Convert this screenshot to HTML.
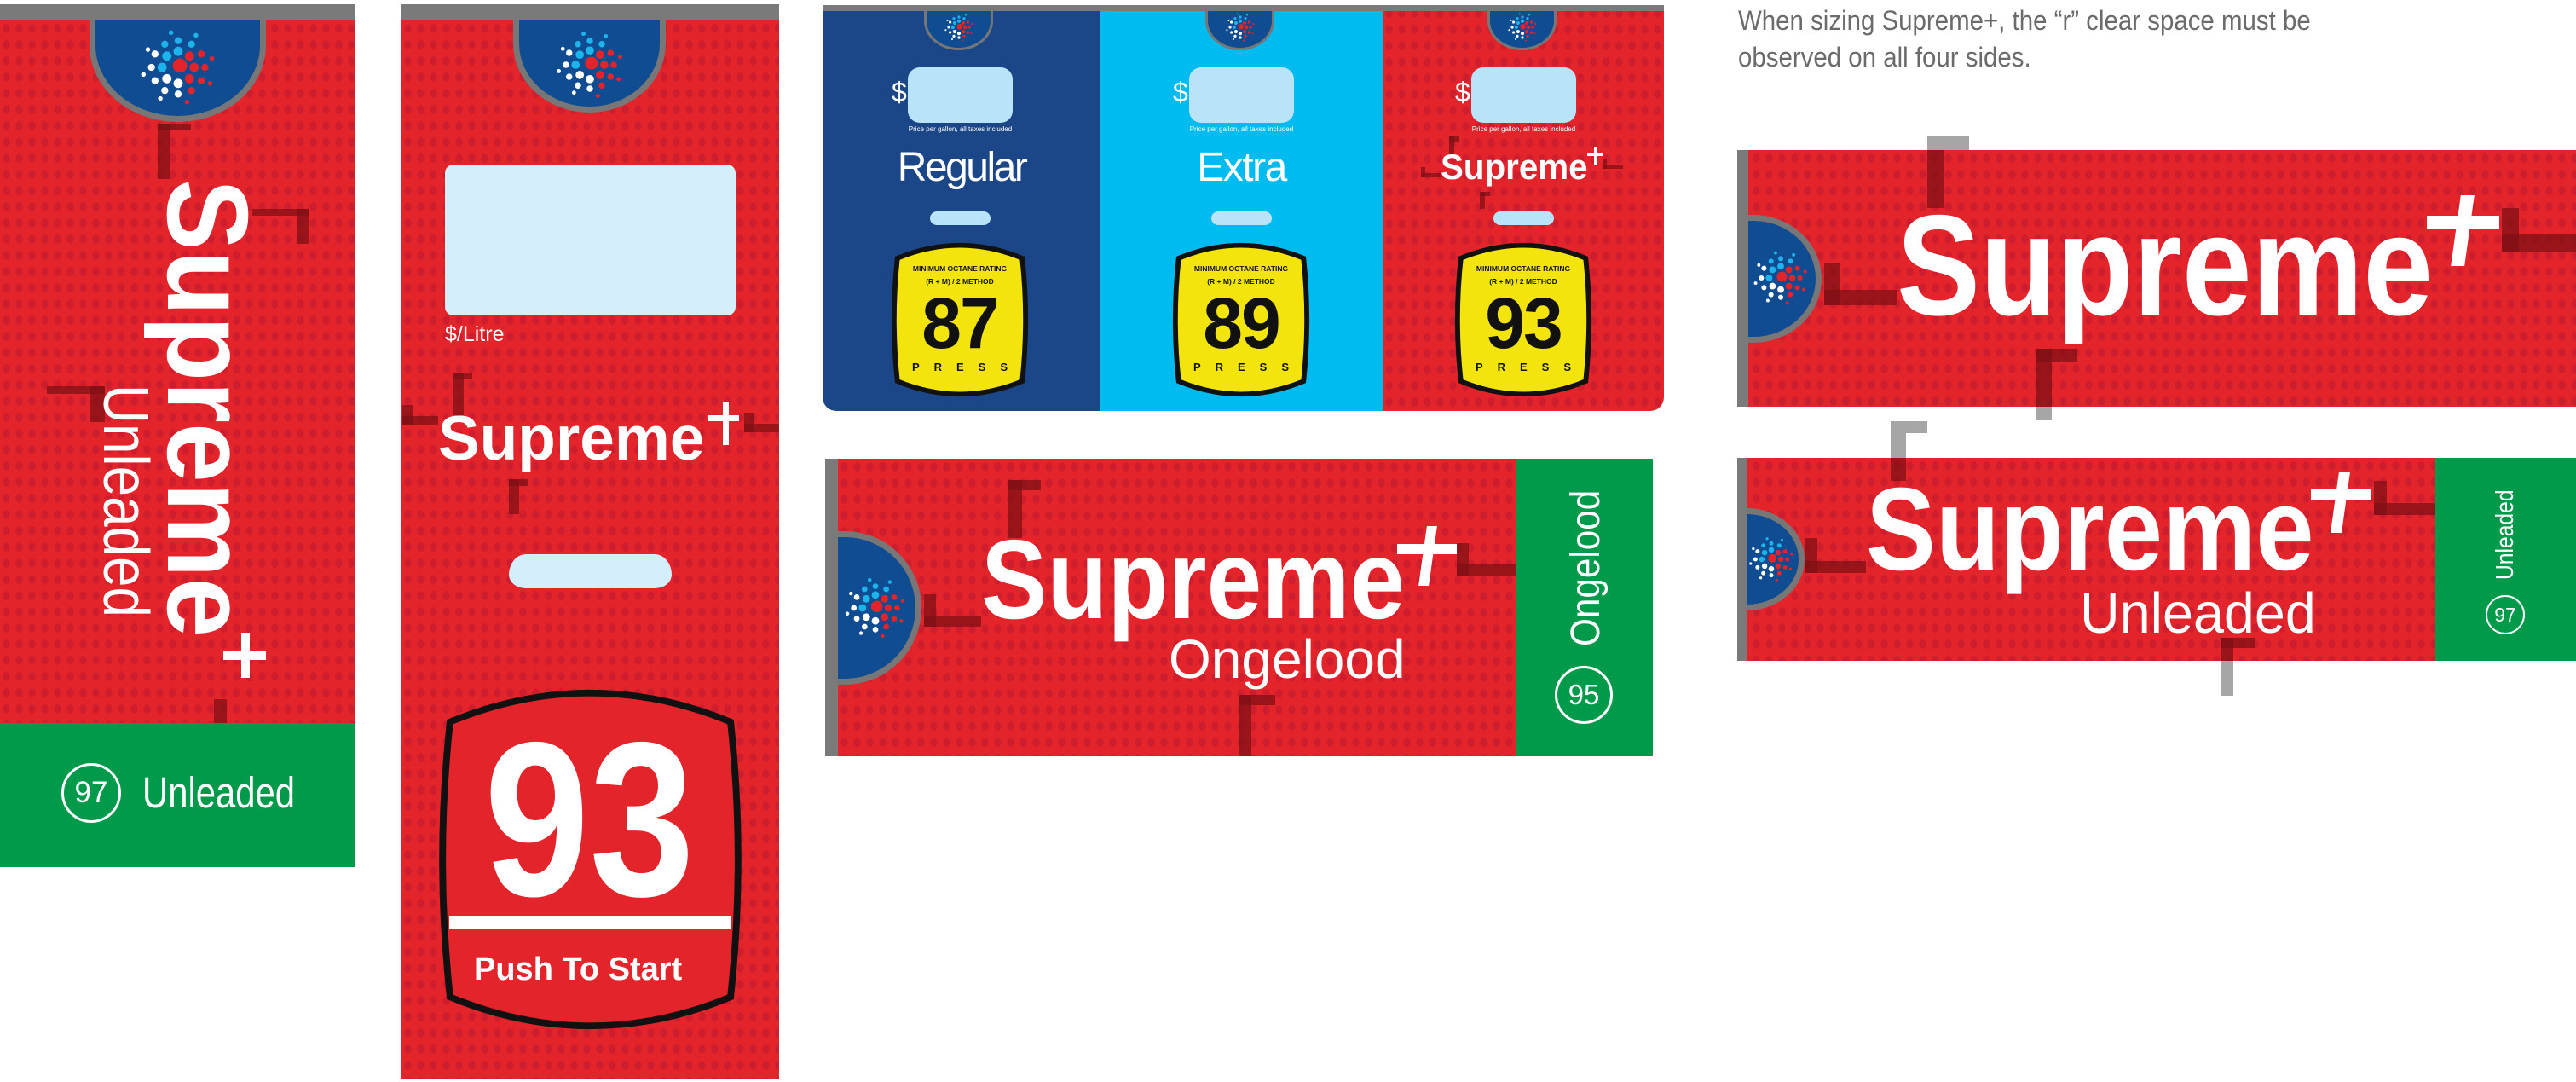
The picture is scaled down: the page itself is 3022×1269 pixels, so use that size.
<!DOCTYPE html>
<html><head><meta charset="utf-8">
<style>
*{margin:0;padding:0;box-sizing:border-box}
body{width:3022px;height:1269px;background:#fff;position:relative;overflow:hidden;font-family:"Liberation Sans",sans-serif;color:#fff}
.a{position:absolute}
.red{background-color:#e3242b;background-image:radial-gradient(ellipse at center,rgba(175,20,50,.42) 0 36%,transparent 42%);background-size:15px 19px}
.dk{position:absolute;background:rgba(125,15,20,.72)}
.gy{position:absolute;background:#a6a6a6}
.gb{position:absolute;background:#7a7a7a}
.wm{position:absolute;font-weight:bold;white-space:nowrap;line-height:1;transform-origin:0 0;color:#fff}
.rg{position:absolute;font-weight:normal;white-space:nowrap;line-height:1;transform-origin:0 0;color:#fff}
.pb{position:absolute;background:#fff}
.badge{position:absolute;background:#0f4c92;border:7px solid #777;border-top:0;border-radius:0 0 50% 50%/0 0 75% 75%;overflow:hidden}
.half{position:absolute;background:#0f4c92;border:7px solid #777;border-left:0}
.circ{position:absolute;border:3px solid #fff;border-radius:50%;display:flex;align-items:center;justify-content:center;font-weight:normal}
</style></head><body>
<svg width="0" height="0" style="position:absolute"><defs><g id="lg">
<circle cx="2" cy="-2" r="8" fill="#e3242b"/>
<circle cx="0" cy="-18" r="5.2" fill="#1cb4ea"/><circle cx="12.7" cy="-12.7" r="5.2" fill="#e3242b"/><circle cx="18" cy="0" r="5.2" fill="#e3242b"/><circle cx="12.7" cy="12.7" r="5.2" fill="#e3242b"/><circle cx="0" cy="18" r="5.2" fill="#fff"/><circle cx="-12.7" cy="12.7" r="5.2" fill="#fff"/><circle cx="-18" cy="0" r="5.2" fill="#1cb4ea"/><circle cx="-12.7" cy="-12.7" r="5.2" fill="#1cb4ea"/>
<circle cx="0" cy="-30" r="4" fill="#1cb4ea"/><circle cx="15" cy="-26" r="4" fill="#1cb4ea"/><circle cx="26" cy="-15" r="4" fill="#e3242b"/><circle cx="30" cy="0" r="4" fill="#e3242b"/><circle cx="26" cy="15" r="4" fill="#e3242b"/><circle cx="15" cy="26" r="4" fill="#e3242b"/><circle cx="0" cy="30" r="4" fill="#fff"/><circle cx="-15" cy="26" r="4" fill="#fff"/><circle cx="-26" cy="15" r="4" fill="#fff"/><circle cx="-30" cy="0" r="4" fill="#fff"/><circle cx="-26" cy="-15" r="4" fill="#fff"/><circle cx="-15" cy="-26" r="4" fill="#1cb4ea"/>
<circle cx="20" cy="-36" r="2.6" fill="#1cb4ea"/><circle cx="38" cy="-10" r="2.6" fill="#e3242b"/><circle cx="36" cy="18" r="2.6" fill="#e3242b"/><circle cx="10" cy="39" r="2.6" fill="#e3242b"/><circle cx="-20" cy="35" r="2.6" fill="#fff"/><circle cx="-39" cy="8" r="2.6" fill="#fff"/><circle cx="-34" cy="-20" r="2.6" fill="#fff"/><circle cx="-8" cy="-39" r="2.6" fill="#1cb4ea"/>
</g>
<path id="oct" d="M10,22 Q85,-10 160,22 Q168,98 160,174 Q85,206 10,174 Q2,98 10,22 Z"/>
</defs></svg>

<!-- PANEL 1 -->
<div class="a red" style="left:0;top:5px;width:416px;height:845px"></div>
<div class="gb" style="left:0;top:5px;width:416px;height:18px"></div>
<div class="badge" style="left:105px;top:23px;width:207px;height:120px"></div>
<svg class="a" style="left:162px;top:32px" width="94" height="94" viewBox="-45 -45 90 90"><use href="#lg"/></svg>
<div class="dk" style="left:185px;top:145px;width:39px;height:8px"></div><div class="dk" style="left:185px;top:145px;width:15px;height:65px"></div>
<div class="dk" style="left:296px;top:245px;width:66px;height:8px"></div><div class="dk" style="left:348px;top:245px;width:14px;height:41px"></div>
<div class="dk" style="left:55px;top:453px;width:68px;height:9px"></div><div class="dk" style="left:105px;top:453px;width:18px;height:42px"></div>
<div class="dk" style="left:251px;top:820px;width:15px;height:30px"></div>
<div class="wm" style="left:311px;top:210px;font-size:135px;transform:rotate(90deg) scaleX(.93)">Supreme</div>
<div class="pb" style="left:262px;top:764px;width:50px;height:10px"></div><div class="pb" style="left:283px;top:742px;width:10px;height:53px"></div>
<div class="rg" style="left:185px;top:451px;font-size:75px;transform:rotate(90deg) scaleX(.85)">Unleaded</div>
<div class="a" style="left:0;top:848px;width:416px;height:169px;background:#009a4a"></div>
<div class="circ" style="left:72px;top:895px;width:70px;height:70px;font-size:35px">97</div>
<div class="rg" style="left:167px;top:904px;font-size:51px;transform:scaleX(.82)">Unleaded</div>

<!-- PANEL 2 -->
<div class="a red" style="left:471px;top:5px;width:443px;height:1261px"></div>
<div class="gb" style="left:471px;top:5px;width:443px;height:19px"></div>
<div class="badge" style="left:602px;top:24px;width:179px;height:108px"></div>
<svg class="a" style="left:650px;top:34px" width="84" height="84" viewBox="-45 -45 90 90"><use href="#lg"/></svg>
<div class="a" style="left:522px;top:193px;width:341px;height:177px;background:#d4eefb;border-radius:10px"></div>
<div class="rg" style="left:522px;top:380px;font-size:25px">$/Litre</div>
<div class="dk" style="left:531px;top:437px;width:23px;height:8px"></div><div class="dk" style="left:531px;top:437px;width:13px;height:50px"></div>
<div class="dk" style="left:472px;top:475px;width:12px;height:23px"></div><div class="dk" style="left:472px;top:488px;width:42px;height:10px"></div>
<div class="dk" style="left:873px;top:484px;width:12px;height:23px"></div><div class="dk" style="left:873px;top:497px;width:41px;height:10px"></div>
<div class="dk" style="left:597px;top:562px;width:23px;height:8px"></div><div class="dk" style="left:597px;top:562px;width:12px;height:41px"></div>
<div class="wm" style="left:514px;top:478px;font-size:73px">Supreme</div>
<div class="pb" style="left:830px;top:487px;width:37px;height:7px"></div><div class="pb" style="left:848px;top:471px;width:7px;height:51px"></div>
<div class="a" style="left:597px;top:650px;width:191px;height:40px;background:#d4eefb;border-radius:20px 20px 20px 20px/24px 24px 16px 16px"></div>
<svg class="a" style="left:506px;top:800px" width="373" height="416" viewBox="0 0 170 196" preserveAspectRatio="none"><use href="#oct" fill="#e3242b" stroke="#111" stroke-width="3.6"/></svg>
<div class="wm" style="left:568px;top:832px;font-size:258px;transform:scaleX(.86)">93</div>
<div class="pb" style="left:527px;top:1074px;width:331px;height:15px"></div>
<div class="wm" style="left:556px;top:1118px;font-size:38px">Push To Start</div>

<!-- PUMP -->
<div class="a" style="left:965px;top:6px;width:987px;height:476px;border-radius:0 0 16px 16px;overflow:hidden">
 <div class="a" style="left:0;top:0;width:326px;height:476px;background:#1b4688"></div>
 <div class="a" style="left:326px;top:0;width:331px;height:476px;background:#00bbf0"></div>
 <div class="a red" style="left:657px;top:0;width:330px;height:476px"></div>
 <div class="gb" style="left:0;top:0;width:987px;height:7px"></div>
</div>
<div class="badge" style="left:1084px;top:13px;width:81px;height:46px;border-width:3px"></div>
<svg class="a" style="left:1107px;top:14px" width="36" height="36" viewBox="-45 -45 90 90"><use href="#lg"/></svg>
<div class="badge" style="left:1414px;top:13px;width:81px;height:46px;border-width:3px"></div>
<svg class="a" style="left:1437px;top:14px" width="36" height="36" viewBox="-45 -45 90 90"><use href="#lg"/></svg>
<div class="badge" style="left:1745px;top:13px;width:81px;height:46px;border-width:3px"></div>
<svg class="a" style="left:1768px;top:14px" width="36" height="36" viewBox="-45 -45 90 90"><use href="#lg"/></svg>
<div class="rg" style="left:1046px;top:92px;font-size:32px">$</div>
<div class="a" style="left:1065px;top:79px;width:123px;height:65px;background:#b8e3f8;border-radius:14px"></div>
<div class="rg" style="left:1065px;top:148px;width:123px;text-align:center;font-size:8px">Price per gallon, all taxes included</div>
<div class="rg" style="left:1376px;top:92px;font-size:32px">$</div>
<div class="a" style="left:1395px;top:79px;width:123px;height:65px;background:#b8e3f8;border-radius:14px"></div>
<div class="rg" style="left:1395px;top:148px;width:123px;text-align:center;font-size:8px">Price per gallon, all taxes included</div>
<div class="rg" style="left:1707px;top:92px;font-size:32px">$</div>
<div class="a" style="left:1726px;top:79px;width:123px;height:65px;background:#b8e3f8;border-radius:14px"></div>
<div class="rg" style="left:1726px;top:148px;width:123px;text-align:center;font-size:8px">Price per gallon, all taxes included</div>
<div class="rg" style="left:965px;top:173px;width:326px;text-align:center;font-size:48px;letter-spacing:-2.5px">Regular</div>
<div class="rg" style="left:1291px;top:173px;width:331px;text-align:center;font-size:48px;letter-spacing:-1.5px">Extra</div>
<div class="dk" style="left:1700px;top:160px;width:12px;height:6px"></div><div class="dk" style="left:1700px;top:160px;width:6px;height:22px"></div>
<div class="dk" style="left:1667px;top:196px;width:5px;height:12px"></div><div class="dk" style="left:1667px;top:203px;width:23px;height:5px"></div>
<div class="dk" style="left:1880px;top:186px;width:5px;height:12px"></div><div class="dk" style="left:1880px;top:193px;width:24px;height:5px"></div>
<div class="dk" style="left:1736px;top:225px;width:12px;height:5px"></div><div class="dk" style="left:1736px;top:225px;width:6px;height:20px"></div>
<div class="wm" style="left:1690px;top:175px;font-size:42px;transform:scaleX(.96)">Supreme</div>
<div class="pb" style="left:1862px;top:179px;width:19px;height:4px"></div><div class="pb" style="left:1870px;top:172px;width:4px;height:22px"></div>
<div class="a" style="left:1091px;top:248px;width:71px;height:16px;background:#b8e3f8;border-radius:8px"></div>
<div class="a" style="left:1421px;top:248px;width:71px;height:16px;background:#b8e3f8;border-radius:8px"></div>
<div class="a" style="left:1752px;top:248px;width:71px;height:16px;background:#b8e3f8;border-radius:8px"></div>
<svg class="a" style="left:1043px;top:282px" width="166" height="186" viewBox="0 0 170 196" preserveAspectRatio="none"><use href="#oct" fill="#f2e40c" stroke="#111" stroke-width="6"/></svg>
<svg class="a" style="left:1373px;top:282px" width="166" height="186" viewBox="0 0 170 196" preserveAspectRatio="none"><use href="#oct" fill="#f2e40c" stroke="#111" stroke-width="6"/></svg>
<svg class="a" style="left:1704px;top:282px" width="166" height="186" viewBox="0 0 170 196" preserveAspectRatio="none"><use href="#oct" fill="#f2e40c" stroke="#111" stroke-width="6"/></svg>
<div style="position:absolute;left:1043px;top:311px;width:166px;text-align:center;color:#111;font-weight:bold;line-height:1">
 <div style="font-size:8.5px">MINIMUM OCTANE RATING</div><div style="font-size:8.5px;margin-top:6px">(R + M) / 2 METHOD</div>
 <div style="font-size:84px;margin-top:3px;letter-spacing:-2px">87</div><div style="font-size:13px;letter-spacing:17px;margin-left:17px;margin-top:3px">PRESS</div></div>
<div style="position:absolute;left:1373px;top:311px;width:166px;text-align:center;color:#111;font-weight:bold;line-height:1">
 <div style="font-size:8.5px">MINIMUM OCTANE RATING</div><div style="font-size:8.5px;margin-top:6px">(R + M) / 2 METHOD</div>
 <div style="font-size:84px;margin-top:3px;letter-spacing:-2px">89</div><div style="font-size:13px;letter-spacing:17px;margin-left:17px;margin-top:3px">PRESS</div></div>
<div style="position:absolute;left:1704px;top:311px;width:166px;text-align:center;color:#111;font-weight:bold;line-height:1">
 <div style="font-size:8.5px">MINIMUM OCTANE RATING</div><div style="font-size:8.5px;margin-top:6px">(R + M) / 2 METHOD</div>
 <div style="font-size:84px;margin-top:3px;letter-spacing:-2px">93</div><div style="font-size:13px;letter-spacing:17px;margin-left:17px;margin-top:3px">PRESS</div></div>

<!-- ONGELOOD BANNER -->
<div class="a red" style="left:968px;top:538px;width:810px;height:349px"></div>
<div class="gb" style="left:968px;top:538px;width:15px;height:349px"></div>
<div class="half" style="left:983px;top:623px;width:98px;height:180px;border-radius:0 90px 90px 0/0 90px 90px 0"></div>
<svg class="a" style="left:989px;top:675px" width="76" height="76" viewBox="-45 -45 90 90"><use href="#lg"/></svg>
<div class="dk" style="left:1183px;top:563px;width:38px;height:12px"></div><div class="dk" style="left:1183px;top:563px;width:16px;height:68px"></div>
<div class="dk" style="left:1084px;top:697px;width:14px;height:38px"></div><div class="dk" style="left:1084px;top:722px;width:67px;height:13px"></div>
<div class="dk" style="left:1709px;top:637px;width:14px;height:38px"></div><div class="dk" style="left:1709px;top:661px;width:69px;height:14px"></div>
<div class="dk" style="left:1454px;top:815px;width:42px;height:12px"></div><div class="dk" style="left:1454px;top:815px;width:14px;height:72px"></div>
<div class="wm" style="left:1151px;top:614px;font-size:132px;transform:scaleX(.88)">Supreme</div>
<div class="pb" style="left:1639px;top:638px;width:70px;height:12px"></div><div class="pb" style="left:1669px;top:617px;width:12px;height:70px;transform:skewX(-8deg)"></div>
<div class="rg" style="left:1371px;top:741px;font-size:64px">Ongelood</div>
<div class="a" style="left:1778px;top:538px;width:161px;height:349px;background:#009a4a"></div>
<div class="rg" style="left:1837px;top:758px;font-size:48px;transform:rotate(-90deg) scaleX(.88)">Ongelood</div>
<div class="circ" style="left:1824px;top:781px;width:68px;height:68px;font-size:33px">95</div>

<!-- CAPTION -->
<div class="a" style="left:2039px;top:3px;color:#6b6b6b;font-size:32px;line-height:43px;transform:scaleX(.92);transform-origin:0 0;white-space:nowrap">When sizing Supreme+, the “r” clear space must be<br>observed on all four sides.</div>

<!-- BANNER A -->
<div class="gy" style="left:2261px;top:160px;width:49px;height:16px;border-radius:8px 0 0 0"></div>
<div class="gy" style="left:2261px;top:160px;width:19px;height:20px"></div>
<div class="a red" style="left:2038px;top:176px;width:984px;height:301px"></div>
<div class="gb" style="left:2038px;top:176px;width:13px;height:301px"></div>
<div class="half" style="left:2051px;top:252px;width:86px;height:150px;border-radius:0 80px 80px 0/0 75px 75px 0"></div>
<svg class="a" style="left:2055px;top:292px" width="68" height="68" viewBox="-45 -45 90 90"><use href="#lg"/></svg>
<div class="dk" style="left:2261px;top:176px;width:19px;height:68px"></div>
<div class="dk" style="left:2140px;top:308px;width:18px;height:50px"></div><div class="dk" style="left:2140px;top:340px;width:85px;height:18px"></div>
<div class="dk" style="left:2935px;top:244px;width:20px;height:51px"></div><div class="dk" style="left:2935px;top:275px;width:87px;height:20px"></div>
<div class="dk" style="left:2388px;top:409px;width:49px;height:16px"></div><div class="dk" style="left:2388px;top:409px;width:19px;height:68px"></div>
<div class="gy" style="left:2388px;top:477px;width:19px;height:16px"></div>
<div class="wm" style="left:2225px;top:227px;font-size:168px;transform:scaleX(.875)">Supreme</div>
<div class="pb" style="left:2847px;top:253px;width:85px;height:16px"></div><div class="pb" style="left:2881px;top:229px;width:16px;height:83px;transform:skewX(-8deg)"></div>

<!-- BANNER B -->
<div class="gy" style="left:2218px;top:494px;width:43px;height:14px;border-radius:8px 0 0 0"></div>
<div class="gy" style="left:2218px;top:494px;width:18px;height:43px"></div>
<div class="a red" style="left:2038px;top:537px;width:819px;height:238px"></div>
<div class="gb" style="left:2038px;top:537px;width:11px;height:238px"></div>
<div class="half" style="left:2049px;top:596px;width:68px;height:120px;border-radius:0 68px 68px 0/0 60px 60px 0"></div>
<svg class="a" style="left:2050px;top:628px" width="56" height="56" viewBox="-45 -45 90 90"><use href="#lg"/></svg>
<div class="dk" style="left:2218px;top:537px;width:18px;height:27px"></div>
<div class="dk" style="left:2117px;top:631px;width:15px;height:41px"></div><div class="dk" style="left:2117px;top:658px;width:72px;height:14px"></div>
<div class="dk" style="left:2785px;top:564px;width:15px;height:40px"></div><div class="dk" style="left:2785px;top:590px;width:72px;height:14px"></div>
<div class="dk" style="left:2605px;top:748px;width:40px;height:12px"></div><div class="dk" style="left:2605px;top:748px;width:15px;height:27px"></div>
<div class="gy" style="left:2605px;top:775px;width:15px;height:41px"></div>
<div class="wm" style="left:2189px;top:552px;font-size:138px;transform:scaleX(.89)">Supreme</div>
<div class="pb" style="left:2711px;top:574px;width:71px;height:13px"></div><div class="pb" style="left:2739px;top:553px;width:13px;height:72px;transform:skewX(-8deg)"></div>
<div class="rg" style="left:2440px;top:686px;font-size:67px;transform:scaleX(.965)">Unleaded</div>
<div class="a" style="left:2857px;top:537px;width:165px;height:238px;background:#009a4a"></div>
<div class="rg" style="left:2925px;top:680px;font-size:29px;transform:rotate(-90deg) scaleX(.85)">Unleaded</div>
<div class="circ" style="left:2916px;top:698px;width:46px;height:46px;font-size:23px;border-width:2px">97</div>
</body></html>
